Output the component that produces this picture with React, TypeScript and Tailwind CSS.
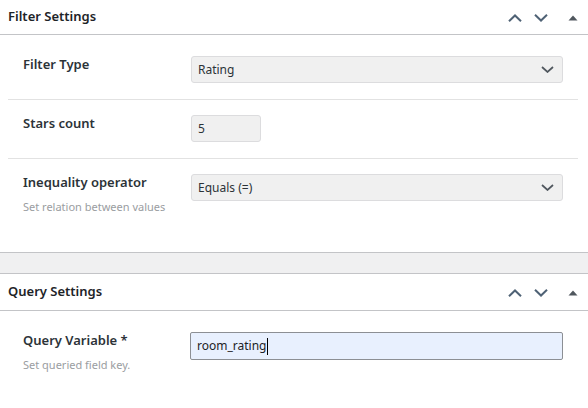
import React from 'react';

const font = { fontFamily: '"Noto Sans", "Open Sans", sans-serif' };

const ChevronUp = () => (
  <svg width="14" height="8" viewBox="0 0 14 8" fill="none">
    <path d="M1 7.2 7 1.5l6 5.7" stroke="#4f6275" strokeWidth="2" />
  </svg>
);

const ChevronDown = () => (
  <svg width="14" height="8" viewBox="0 0 14 8" fill="none">
    <path d="M1 0.8 7 6.5l6-5.7" stroke="#4f6275" strokeWidth="2" />
  </svg>
);

const Caret = () => (
  <svg width="10" height="6" viewBox="0 0 10 6">
    <path d="M0.5 5.5 5 0.5l4.5 5z" fill="#50575e" />
  </svg>
);

const SelectArrow = () => (
  <svg width="13" height="7" viewBox="0 0 13 7" fill="none">
    <path d="M1 1 6.5 6 12 1" stroke="#50575e" strokeWidth="1.7" />
  </svg>
);

const BoxHeader = ({ title, className }: { title: string; className: string }) => (
  <div className={`flex items-center justify-between pl-2 pr-[10px] border-b border-[#c3c4c7] ${className}`}>
    <h2 className="text-[13px] font-semibold text-[#1d2327]">{title}</h2>
    <div className="flex items-center gap-[12px] pt-[2px]">
      <ChevronUp />
      <ChevronDown />
      <span className="ml-[8px] flex"><Caret /></span>
    </div>
  </div>
);

const Select = ({ value }: { value: string }) => (
  <div className="w-[372px] h-[27px] flex items-center justify-between pl-[6px] pr-[8px] bg-[#f0f0f0] border border-[#dcdcde] rounded-[3px] text-[12px] text-[#2c3338]">
    <span>{value}</span>
    <SelectArrow />
  </div>
);

const Field = ({
  label,
  description,
  children,
  last,
}: {
  label: string;
  description?: string;
  children: React.ReactNode;
  last?: boolean;
}) => (
  <div className={`flex items-start pt-[15px] pb-[16px] ${last ? '' : 'border-b border-[#e2e2e2]'}`}>
    <div className="w-[183px] shrink-0 pl-[15px] -mt-[2px]">
      <div className="text-[13px] leading-[20px] font-semibold text-[#2c3338]">{label}</div>
      {description && (
        <div className="mt-[7px] text-[11px] leading-[16px] whitespace-nowrap text-[#9a9da1]">{description}</div>
      )}
    </div>
    <div>{children}</div>
  </div>
);

export default function App() {
  return (
    <div className="w-[588px] h-[408px] bg-white overflow-hidden" style={font}>
      <BoxHeader title="Filter Settings" className="h-[35px]" />
      <div className="pl-2 pr-[10px] pt-[6px] pb-[21px]">
        <Field label="Filter Type">
          <Select value="Rating" />
        </Field>
        <Field label="Stars count">
          <div className="w-[70px] h-[27px] flex items-center pl-[6px] bg-[#f0f0f0] border border-[#dcdcde] rounded-[3px] text-[12px] text-[#2c3338]">
            5
          </div>
        </Field>
        <Field label="Inequality operator" description="Set relation between values" last>
          <Select value="Equals (=)" />
        </Field>
      </div>

      <div className="h-[21px] bg-[#f0f0f1] border-t border-[#c3c4c7]" />

      <div className="border-t border-[#c3c4c7]">
        <BoxHeader title="Query Settings" className="h-[37px]" />
        <div className="pl-2 pr-[10px] pt-[6px]">
          <Field label="Query Variable *" description="Set queried field key." last>
            <div className="-ml-px w-[373px] h-[28px] flex items-center pl-[6px] bg-[#e8f0fe] border border-[#8c8f94] rounded-[2px] text-[12px] text-[#1d2327]">
              room_rating
              <span className="inline-block w-px h-[17px] bg-black ml-px" />
            </div>
          </Field>
        </div>
      </div>
    </div>
  );
}
